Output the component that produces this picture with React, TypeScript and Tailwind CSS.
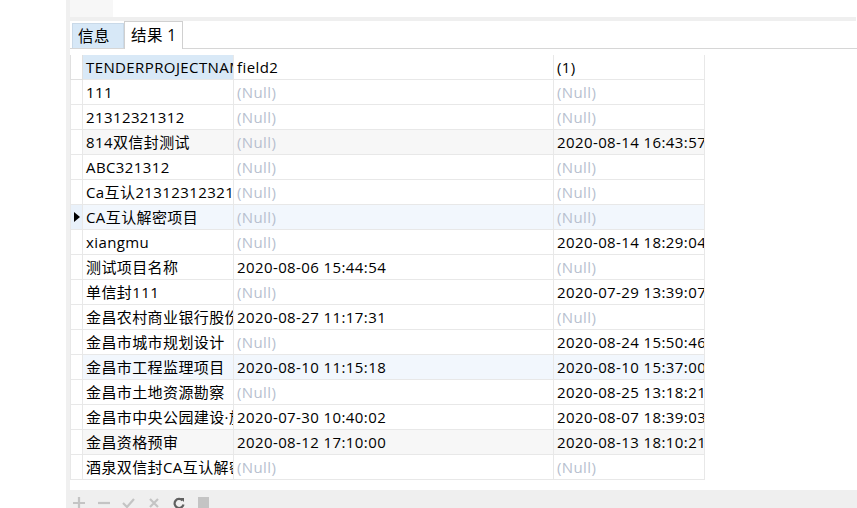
const NULL = null;

type Row = { name: string; f2: string | null; f3: string | null; bg?: 'gray' | 'blue'; selected?: boolean };

const ROWS: Row[] = [
  { name: '111', f2: NULL, f3: NULL },
  { name: '21312321312', f2: NULL, f3: NULL },
  { name: '814双信封测试', f2: NULL, f3: '2020-08-14 16:43:57', bg: 'gray' },
  { name: 'ABC321312', f2: NULL, f3: NULL },
  { name: 'Ca互认21312312321', f2: NULL, f3: NULL },
  { name: 'CA互认解密项目', f2: NULL, f3: NULL, bg: 'blue', selected: true },
  { name: 'xiangmu', f2: NULL, f3: '2020-08-14 18:29:04' },
  { name: '测试项目名称', f2: '2020-08-06 15:44:54', f3: NULL },
  { name: '单信封111', f2: NULL, f3: '2020-07-29 13:39:07' },
  { name: '金昌农村商业银行股份有限公司', f2: '2020-08-27 11:17:31', f3: NULL },
  { name: '金昌市城市规划设计', f2: NULL, f3: '2020-08-24 15:50:46' },
  { name: '金昌市工程监理项目', f2: '2020-08-10 11:15:18', f3: '2020-08-10 15:37:00', bg: 'blue' },
  { name: '金昌市土地资源勘察', f2: NULL, f3: '2020-08-25 13:18:21' },
  { name: '金昌市中央公园建设·旅游', f2: '2020-07-30 10:40:02', f3: '2020-08-07 18:39:03' },
  { name: '金昌资格预审', f2: '2020-08-12 17:10:00', f3: '2020-08-13 18:10:21', bg: 'gray' },
  { name: '酒泉双信封CA互认解密', f2: NULL, f3: NULL },
];

const cell = 'h-[25px] border-b border-r border-[#e8e8e8] pl-[3px] pt-px flex items-center overflow-hidden whitespace-nowrap';

function Value({ v }: { v: string | null }) {
  return v === null ? <span className="text-[#b7bfcf]">(Null)</span> : <span>{v}</span>;
}

function ToolIcon({ children }: { children: React.ReactNode }) {
  return <div className="w-[25px] flex justify-center">{children}</div>;
}

export default function App() {
  return (
    <div className="flex h-[508px] w-[857px] overflow-hidden bg-white text-[15px] tracking-[0.4px] text-black font-['Open_Sans','Noto_Sans_CJK_SC',sans-serif]">
      <div className="w-[66px] bg-white" />
      <div className="w-[4px] bg-[#f0f0f0]" />
      <div className="flex flex-1 flex-col">
        <div className="flex h-[17px]">
          <div className="w-[43px] bg-[#f7f7f7]" />
          <div className="flex-1 bg-white" />
        </div>
        <div className="mr-px h-[4px] bg-[#efefef]" />

        {/* tabs */}
        <div className="flex h-[28px] items-end border-b border-[#d6d6d6] pl-[2px] text-[15.5px]">
          <div className="flex h-[25px] w-[52px] items-center border border-b-0 border-[#c9d9e8] bg-[#d7e8f7] pl-[5px] pt-px">信息</div>
          <div className="-mb-px flex h-[28px] w-[59px] items-center border border-b-0 border-[#d0d0d0] bg-white pl-[6px]">结果 1</div>
        </div>
        <div className="h-[6px]" />

        {/* grid */}
        <div className="grid grid-cols-[13px_151px_320px_151px]">
          <div className="h-[25px] border-b border-r border-l border-[#e0e0e0]" />
          <div className={`${cell} bg-[#d9e9f7] border-[#dcdcdc]`}>TENDERPROJECTNAME</div>
          <div className={`${cell} border-[#dcdcdc]`}>field2</div>
          <div className={`${cell} border-[#dcdcdc]`}>(1)</div>
          {ROWS.map((r, i) => {
            const bg = r.bg === 'gray' ? 'bg-[#f7f7f7]' : r.bg === 'blue' ? 'bg-[#f2f7fd]' : 'bg-white';
            return [
              <div
                key={`h${i}`}
                className={`h-[25px] border-b border-r border-l border-[#e8e8e8] flex items-center justify-center ${r.selected ? 'bg-[#e9f1fa]' : 'bg-white'}`}
              >
                {r.selected && (
                  <svg width="6" height="10" viewBox="0 0 6 10">
                    <path d="M0 0 L6 5 L0 10 Z" fill="#000" />
                  </svg>
                )}
              </div>,
              <div key={`a${i}`} className={`${cell} ${bg}`}>{r.name}</div>,
              <div key={`b${i}`} className={`${cell} ${bg}`}><Value v={r.f2} /></div>,
              <div key={`c${i}`} className={`${cell} ${bg}`}><Value v={r.f3} /></div>,
            ];
          })}
        </div>

        <div className="flex-1" />

        {/* bottom toolbar */}
        <div className="flex h-[18px] bg-[#efefef] pt-[7px] -ml-[4px]">
          <ToolIcon>
            <svg width="12" height="12" viewBox="0 0 12 12"><path d="M6 0v12M0 6h12" stroke="#c4c4c4" strokeWidth="2.2" /></svg>
          </ToolIcon>
          <ToolIcon>
            <svg width="12" height="12" viewBox="0 0 12 12"><path d="M0 6h12" stroke="#c4c4c4" strokeWidth="2.2" /></svg>
          </ToolIcon>
          <ToolIcon>
            <svg width="13" height="12" viewBox="0 0 13 12"><path d="M1 6l4 4 7-8" stroke="#c4c4c4" strokeWidth="2.2" fill="none" /></svg>
          </ToolIcon>
          <ToolIcon>
            <svg width="12" height="12" viewBox="0 0 12 12"><path d="M2 2l8 8M10 2l-8 8" stroke="#c4c4c4" strokeWidth="2.2" /></svg>
          </ToolIcon>
          <ToolIcon>
            <svg width="12" height="12" viewBox="0 0 12 12">
              <path d="M9.5 3.5A4.5 4.5 0 1 0 10.5 7.5" stroke="#606060" strokeWidth="2.2" fill="none" />
              <path d="M7 1h4v4z" fill="#606060" />
            </svg>
          </ToolIcon>
          <ToolIcon>
            <div className="h-[11px] w-[11px] bg-[#c4c4c4]" />
          </ToolIcon>
        </div>
      </div>
    </div>
  );
}
